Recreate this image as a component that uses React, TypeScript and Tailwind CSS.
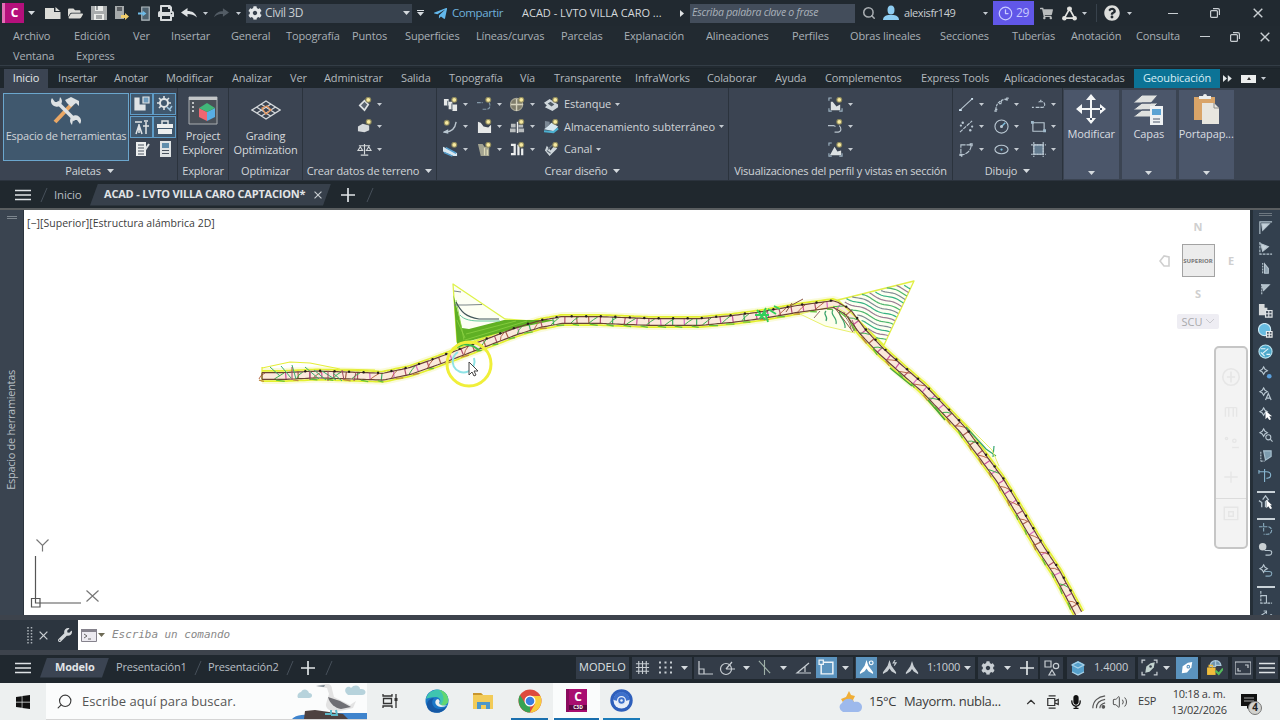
import type { ReactNode } from "react";
import {
  FaCog,
  FaFolderOpen,
  FaMicrophone,
  FaPrint,
  FaQuestionCircle,
  FaSave,
  FaShoppingCart,
  FaTelegramPlane,
  FaUser,
  FaWindows,
  FaWrench,
} from "react-icons/fa";
import { ChevronUp, Clock3, Search, Volume2 } from "lucide-react";

type Pt = [number, number];

function Slot({ w, children }: { w: string; children?: ReactNode }) {
  return <div className={`flex h-full shrink-0 items-center whitespace-nowrap ${w}`}>{children}</div>;
}

function Caret({ className = "text-[#d5dade]" }: { className?: string }) {
  return (
    <svg width="7" height="4" viewBox="0 0 7 4" className={`shrink-0 ${className}`}>
      <path d="M0 0h7L3.5 4z" fill="currentColor" />
    </svg>
  );
}

function SmallCaret() {
  return (
    <svg width="5" height="3" viewBox="0 0 5 3" className="shrink-0 text-[#c5cbd1]">
      <path d="M0 0h5L2.5 3z" fill="currentColor" />
    </svg>
  );
}

function Ico({ s = 16, children, className = "" }: { s?: number; children: ReactNode; className?: string }) {
  return (
    <svg
      width={s}
      height={s}
      viewBox="0 0 16 16"
      fill="none"
      stroke="currentColor"
      strokeWidth="1.2"
      className={`shrink-0 ${className}`}
    >
      {children}
    </svg>
  );
}

function Spark({ x = 12, y = 3 }: { x?: number; y?: number }) {
  return (
    <g stroke="none">
      <circle cx={x} cy={y} r="3.200" fill="#8f8a5d" />
      <circle cx={x} cy={y} r="2" fill="#f7e9a0" />
    </g>
  );
}

function Burger({ className = "text-[#dfe3e6]" }: { className?: string }) {
  return (
    <svg width="16" height="12" viewBox="0 0 16 12" className={className}>
      <path d="M0 1.5h16M0 6h16M0 10.5h16" stroke="currentColor" strokeWidth="1.7" />
    </svg>
  );
}

function Plus() {
  return (
    <svg width="14" height="14" viewBox="0 0 14 14" className="text-[#dfe3e6]">
      <path d="M7 0v14M0 7h14" stroke="currentColor" strokeWidth="1.7" />
    </svg>
  );
}

function Slash() {
  return (
    <svg width="8" height="14" viewBox="0 0 8 14" className="text-[#46505a]">
      <path d="M7 0L1 14" stroke="currentColor" />
    </svg>
  );
}

function Cross({ s = 10 }: { s?: number }) {
  return (
    <svg width={s} height={s} viewBox="0 0 10 10" className="text-[#c9ced2]">
      <path d="M.7.7l8.6 8.6M9.3.7L.7 9.3" stroke="currentColor" strokeWidth="1.4" />
    </svg>
  );
}

function Restore() {
  return (
    <svg width="10" height="10" viewBox="0 0 10 10" fill="none" className="text-[#c9ced2]">
      <rect x=".6" y="2.6" width="6.8" height="6.8" rx="1" stroke="currentColor" strokeWidth="1.2" />
      <path d="M3 .7h5a1.4 1.4 0 011.4 1.4V7" stroke="currentColor" strokeWidth="1.2" />
    </svg>
  );
}

function TitleBar() {
  return (
    <div className="flex h-[26px] items-center bg-[#212930] pl-[2px] text-[11px] text-[#c9ced2]">
      <Slot w="w-[26px]">
        <div className="flex h-5 w-[22px] items-center justify-center border-l-[3px] border-[#e26fb5] bg-[#b5107c] text-[12px] font-bold text-white">
          C
        </div>
      </Slot>
      <Slot w="w-[17px]"><Caret /></Slot>
      <Slot w="w-[23px]">
        <svg width="16" height="12" viewBox="0 0 16 12" fill="#dcdcd8"><path d="M0 1h9v4h6.500V12H0zM10.500 0l4.500 4h-4.500z" /></svg>
      </Slot>
      <Slot w="w-[23px]"><FaFolderOpen size={15} color="#dcdcd8" /></Slot>
      <Slot w="w-[23px]">
        <Ico>
          <path d="M0 1h16v14H0z" fill="#a9acad" stroke="none" />
          <path d="M4 1h8v5H4zM3 9h10v6H3z" fill="#ecedeb" stroke="none" />
          <path d="M5 11h6M5 13h6M6 1v4" stroke="#5c6266" />
        </Ico>
      </Slot>
      <Slot w="w-6">
        <Ico><path d="M1 1h9v13H1z" fill="#a6aaab" stroke="none" /><path d="M3 2h5v4H3z" fill="#5c6064" stroke="none" /><path d="M7 10h4V8l4 3.500-4 3.500v-2H7z" fill="#f1cd6a" stroke="none" /></Ico>
      </Slot>
      <Slot w="w-5">
        <Ico s={15}><path d="M4 1h8v14H4z" stroke="#b5bdc2" fill="#4f626f" /><path d="M0 7h5V5l4 3-4 3V9H0z" fill="#6fbbe8" stroke="none" /></Ico>
      </Slot>
      <Slot w="w-[23px]"><FaPrint size={16} color="#d9dcde" /></Slot>
      <Slot w="w-[22px]">
        <svg width="16" height="10" viewBox="0 0 16 10" fill="#dfe2e4"><path d="M0 4.500L6.500 0v3C11 3 14.500 5 16 9.500 13 6.500 10 6 6.500 6v3z" /></svg>
      </Slot>
      <Slot w="w-[11px]"><SmallCaret /></Slot>
      <Slot w="w-[22px]">
        <svg width="15" height="10" viewBox="0 0 16 10" fill="#535c65"><path d="M16 4.500L9.500 0v3C5 3 1.500 5 0 9.500 3 6.500 6 6 9.500 6v3z" /></svg>
      </Slot>
      <Slot w="w-[10px]"><SmallCaret /></Slot>
      <div className="flex h-[19px] w-[166px] items-center bg-[#38424e] pr-[2px] pl-[2px] text-[12px]">
        <FaCog size={14} color="#e3e6e8" />
        <span className="ml-[3px] flex-1 tracking-[-0.400px]">Civil 3D</span>
        <Caret />
      </div>
      <div className="ml-[5px] flex w-4 flex-col gap-[1px]">
        <div className="h-[1px] w-[7px] bg-[#d5dade]" />
        <Caret />
      </div>
      <Slot w="w-[19px]"><FaTelegramPlane size={15} color="#63b8ec" /></Slot>
      <Slot w="w-[70px]"><span className="text-[11.500px] tracking-[-0.400px] text-[#6fb1dd]">Compartir</span></Slot>
      <Slot w="w-[158px]"><span className="text-[11px] text-[#d5d9dc]">ACAD - LVTO VILLA CARO ...</span></Slot>
      <Slot w="w-[10px]">
        <svg width="4" height="7" viewBox="0 0 4 7" fill="#e0e3e5"><path d="M0 0l4 3.500L0 7z" /></svg>
      </Slot>
      <div className="flex h-[19px] w-[165px] items-center bg-[#434d5b] pl-[2px] text-[10.5px] tracking-[-0.25px] whitespace-nowrap text-[#a9b1ba] italic">
        Escriba palabra clave o frase
      </div>
      <div className="w-[7px]" />
      <Slot w="w-[21px]"><Search size={14} strokeWidth={2.600} color="#a9aeb2" /></Slot>
      <Slot w="w-[21px]">
        <Ico className="text-[#8ecdf2]">
          <g fill="currentColor" stroke="none"><ellipse cx="8" cy="5" rx="3.500" ry="4.500" /><path d="M0 15c0-4 4-5 6-5h4c2 0 6 1 6 5z" /></g>
        </Ico>
      </Slot>
      <Slot w="w-[79px]"><span className="tracking-[-0.400px]">alexisfr149</span></Slot>
      <Slot w="w-[10px]"><SmallCaret /></Slot>
      <div className="flex h-6 w-[41px] items-center justify-center gap-[3px] bg-[#6157e8] text-[12px] tracking-[-0.300px] text-[#c9cbff]">
        <Clock3 size={15} />
        29
      </div>
      <div className="w-[6px]" />
      <Slot w="w-[22px]"><FaShoppingCart size={13} color="#b9bcbd" /></Slot>
      <Slot w="w-5">
        <Ico s={15} className="text-[#e3e3e0]"><path d="M8 3L2.500 13h11z" strokeWidth="1.8" /><g fill="currentColor"><circle cx="8" cy="3" r="2" /><circle cx="2.500" cy="13" r="1.800" /><circle cx="13.500" cy="13" r="1.800" /></g></Ico>
      </Slot>
      <Slot w="w-[14px]"><SmallCaret /></Slot>
      <div className="h-[18px] w-[8px] border-l border-[#38424c]" />
      <Slot w="w-[23px]"><FaQuestionCircle size={16} color="#dcdddb" /></Slot>
      <Slot w="w-[41px]"><SmallCaret /></Slot>
      <Slot w="w-[42px]"><div className="h-[1px] w-[10px] bg-[#c9ced2]" /></Slot>
      <Slot w="w-[43px]"><Restore /></Slot>
      <Cross />
    </div>
  );
}

const menus = [
  ["Archivo", "w-[61px]"],
  ["Edición", "w-[59px]"],
  ["Ver", "w-[38px]"],
  ["Insertar", "w-[60px]"],
  ["General", "w-[55px]"],
  ["Topografía", "w-[66px]"],
  ["Puntos", "w-[53px]"],
  ["Superficies", "w-[71px]"],
  ["Líneas/curvas", "w-[85px]"],
  ["Parcelas", "w-[63px]"],
  ["Explanación", "w-[82px]"],
  ["Alineaciones", "w-[86px]"],
  ["Perfiles", "w-[58px]"],
  ["Obras lineales", "w-[90px]"],
  ["Secciones", "w-[72px]"],
  ["Tuberías", "w-[59px]"],
  ["Anotación", "w-[65px]"],
  ["Consulta", "w-[64px]"],
];

function MenuBar() {
  return (
    <div className="h-[43px] border-b border-[#1c242a] bg-[#222a31] pl-[13px] text-[11px] tracking-[-0.150px] text-[#a9b0b6]">
      <div className="flex h-[21px] items-center">
        {menus.map(([label, w]) => (
          <Slot key={label} w={w}>{label}</Slot>
        ))}
        <Slot w="w-[30px]"><div className="h-[1px] w-[10px] bg-[#c9ced2]" /></Slot>
        <Slot w="w-[30px]"><Restore /></Slot>
        <Cross />
      </div>
      <div className="flex h-[18px] items-center">
        <Slot w="w-[63px]">Ventana</Slot>
        <Slot w="w-[63px]">Express</Slot>
      </div>
      <div className="-ml-[13px] h-[1px] bg-[#333d46]" />
    </div>
  );
}

const ribbonTabs = [
  ["Insertar", "w-[56px]"],
  ["Anotar", "w-[52px]"],
  ["Modificar", "w-[66px]"],
  ["Analizar", "w-[58px]"],
  ["Ver", "w-[34px]"],
  ["Administrar", "w-[77px]"],
  ["Salida", "w-[48px]"],
  ["Topografía", "w-[71px]"],
  ["Vía", "w-[34px]"],
  ["Transparente", "w-[81px]"],
  ["InfraWorks", "w-[72px]"],
  ["Colaborar", "w-[68px]"],
  ["Ayuda", "w-[50px]"],
  ["Complementos", "w-[96px]"],
  ["Express Tools", "w-[83px]"],
  ["Aplicaciones destacadas", "w-[130px]"],
];

function RibbonTabs() {
  return (
    <div className="flex h-[19px] items-center bg-[#1f272d] pl-1 text-[11px] tracking-[-0.150px] text-[#b3b9be]">
      <div className="mr-[10px] flex h-full w-11 items-center justify-center bg-[#3b4452] text-[#e4e7e9]">Inicio</div>
      {ribbonTabs.map(([label, w]) => (
        <Slot key={label} w={w}>{label}</Slot>
      ))}
      <div className="mr-[3px] flex h-full w-[86px] items-center justify-center bg-[#0c7396] text-[#d9eef5]">Geoubicación</div>
      <Slot w="w-[18px]">
        <svg width="9" height="7" viewBox="0 0 9 7" fill="#e3e6e8"><path d="M0 0l4 3.500L0 7zM4.800 0l4 3.500-4 3.500z" /></svg>
      </Slot>
      <div className="mr-[5px] flex h-2 w-[15px] items-center justify-center bg-[#eceeee] text-[#333]">
        <svg width="4" height="3" viewBox="0 0 4 3"><path d="M0 3h4L2 0z" fill="currentColor" /></svg>
      </div>
      <SmallCaret />
    </div>
  );
}

function Panel({ w, title, caret, children }: { w: string; title: string; caret?: boolean; children: ReactNode }) {
  return (
    <div className={`flex shrink-0 flex-col border-r border-[#2b333d] bg-[#3b4452] ${w}`}>
      <div className="flex h-[74px] pt-[5px]">{children}</div>
      <div className="flex h-[18px] items-center justify-center gap-[6px] whitespace-nowrap text-[#d0d4d8]">
        {title}
        {caret && <Caret />}
      </div>
    </div>
  );
}

function MiniButton({ on, children }: { on?: boolean; children: ReactNode }) {
  return (
    <div className={`flex h-[22px] w-[23px] items-center justify-center border text-[#dfe3e5] ${on ? "border-[#5f9dc8] bg-[#40586e]" : "border-transparent"}`}>
      {children}
    </div>
  );
}

function BigButton({ w, lines, children }: { w: string; lines: string[]; children: ReactNode }) {
  return (
    <div className={`flex flex-col items-center pt-[2px] text-center leading-[14px] whitespace-nowrap text-[#d5d9dc] ${w}`}>
      <div className="mb-[4px] flex h-[30px] items-center">{children}</div>
      {lines.map((l) => (
        <span key={l}>{l}</span>
      ))}
    </div>
  );
}

const terrainIcons = [
  <><path d="M3 9l5-5 4 4-4 6z" fill="#59636f" stroke="#dde1e3" strokeWidth="1.800" /><Spark /></>,
  <><path d="M1 8l5-3 7 2v5l-5 2-7-1z" fill="#d5d9db" stroke="none" /><Spark x={12.500} /></>,
  <path d="M8 2v11M4 14h8M2 4h12M1 9l2.500-4L6 9zM10 9l2.500-4L15 9z" stroke="#d5d9db" />,
];

const designIcons = [
  <><path d="M1 2h5v3h4v3h5v7h-5v-2H6V9H1z" fill="#e6e8e8" stroke="none" /><path d="M5 4v6M9.500 7v7" stroke="#65717c" /><Spark /></>,
  <><path d="M0 6h6M6 13h4c5 0 4-5 3-7" stroke="#8499a9" strokeDasharray="4 1" /><Spark /></>,
  <><circle cx="7" cy="8" r="6.500" fill="#7e7c6b" stroke="#a7a695" /><path d="M7 2v13M1 8h13" stroke="#d5d2bd" strokeWidth="1.500" /><Spark /></>,
  <><path d="M2 14c7 0 11-4 12-11" strokeWidth="1.500" stroke="#b9c4cd" /><path d="M1 14l4-2v3z" fill="#b9c4cd" /><Spark x={4} y={4} /></>,
  <><path d="M1 3v12h14V6l-3 3-5-1-3-4z" fill="#e6e8e8" stroke="none" /><Spark /></>,
  <><path d="M1 5h5v4H1zM0 10h6v4H0zM9 10h6v4H9zM9 6h5v3H9z" fill="#b7bbbd" stroke="none" /><path d="M8 3v12" stroke="#efefef" strokeWidth="1.500" /><Spark /></>,
  <><path d="M0 5l15 7v3h-4L0 10z" fill="#d8e7f0" stroke="none" /><path d="M1 11l9 4M3 6l11 6" stroke="#55a0cf" strokeWidth="1.600" /><Spark /></>,
  <><path d="M1 2h5l2 3h5v10H4z" fill="#a3a491" stroke="none" /><path d="M8 6v8M11 8v6" stroke="#dedbb8" strokeWidth="1.300" /><Spark /></>,
  <><path d="M1 3h4v10H1M9 3v11M13 7v7" stroke="#eceeee" strokeWidth="2.400" /><Spark /></>,
];

const wideIcons = [
  { label: "Estanque", icon: <><path d="M0 6l6-4 9 6v3l-6 4-8-4 2-2z" fill="#cfd7dc" stroke="none" /><path d="M4 7l3-2 4 3-3 2z" fill="#4e5a66" stroke="none" /><Spark /></> },
  { label: "Almacenamiento subterráneo", icon: <><path d="M0 11l8-7 7 4-4 5z" fill="#d8e7f0" stroke="none" /><path d="M0 13l10 1 5-4" stroke="#4cb0d0" strokeWidth="2.200" /><path d="M1 2v8l5-4V3z" fill="#7b8895" stroke="none" /><Spark /></> },
  { label: "Canal", icon: <><path d="M3 4l-2 5 5 6 8-8-3-3-4 5z" fill="#cfd7dc" stroke="none" /><path d="M3 9l4 3M9 3l-5 5" stroke="#65717c" /><Spark /></> },
];

const profileIcons = [
  <><path d="M3 5v9h10V8l-4 2-4-5z" fill="#dde1e3" stroke="none" /><path d="M1 4V1h3M15 12v3h-3M1 12v3h3" stroke="#9fb4c3" /><Spark /></>,
  <><path d="M0 7h6l2 1M7 14h4c4-1 3-5 1-7" stroke="#b9c4cd" /><Spark /></>,
  <><path d="M2 14l5-9 3 5 4-1v5z" fill="#dde1e3" stroke="none" /><path d="M1 4V1h3M15 12v3h-3M1 12v3h3" stroke="#9fb4c3" /><Spark /></>,
];

const drawIcons = [
  <><path d="M1 14L14 2" /><path d="M0 13h3v2H0zM13 1h2v2h-2z" fill="#cfe3f1" stroke="none" /></>,
  <path d="M2 14C2 7 6 3 14 2M1 13h2v2H1zM6 5h2v2H6zM13 1h2v2h-2z" strokeDasharray="3 1" />,
  <path d="M1 11h2M5 11h7c4 0 3-6 0-6H9l2-2" strokeDasharray="4 1" />,
  <><path d="M1 14L14 2" strokeDasharray="4 1" /><g fill="currentColor" stroke="none"><circle cx="4" cy="4" r="1.300" /><circle cx="12" cy="12" r="1.300" /><circle cx="14" cy="8" r="1.200" /><circle cx="2" cy="7" r="1.200" /></g></>,
  <><circle cx="8" cy="8" r="7" /><path d="M8 8l4-4" stroke="#7fc0e0" strokeWidth="1.600" /><circle cx="8" cy="8" r="1" fill="currentColor" /></>,
  <><path d="M2 4h12v9H2z" /><path d="M0 2h3v3H0zM13 11h3v3h-3z" fill="#9fb9cb" stroke="none" /></>,
  <path d="M2 3h11C13 9 9 13 2 14zM1 13h2v2H1zM12 2h2v2h-2z" strokeDasharray="5 1" />,
  <><ellipse cx="8" cy="8" rx="7" ry="4.500" /><circle cx="8" cy="8" r="1.200" fill="#7fc0e0" stroke="none" /></>,
  <><path d="M3 3h10v10H3z" fill="#627a8e" /><path d="M3 0v16M13 0v16M0 3h16M0 13h16" strokeDasharray="2 1" /></>,
];

function IconGrid({ icons, className }: { icons: ReactNode[]; className: string }) {
  return (
    <div className={`grid auto-rows-[22.5px] ${className}`}>
      {icons.map((icon, i) => (
        <div key={i} className="flex items-center gap-[5px] text-[#b9c7d2]">
          <Ico s={15}>{icon}</Ico>
          <SmallCaret />
        </div>
      ))}
    </div>
  );
}

function CollapsedPanel({ label, children }: { label: string; children: ReactNode }) {
  return (
    <div className="mt-[2px] mr-[3px] flex h-[89px] w-[54.500px] flex-col items-center overflow-hidden bg-[#4b566a] text-[#d9dde1]">
      <div className="flex h-[36px] items-center pt-[2px]">{children}</div>
      <div className="h-[18px] leading-[16px] tracking-[-0.100px] whitespace-nowrap">{label}</div>
      <div className="mt-[27px]"><Caret /></div>
    </div>
  );
}

function Ribbon() {
  return (
    <div className="flex h-[93px] border-b border-[#2b333d] bg-[#3b4452] pl-[2px] text-[11px] tracking-[-0.200px] text-[#d0d4d8]">
      <Panel w="w-[176px]" title="Paletas" caret>
        <div className="ml-[1px] flex h-[68px] w-[126px] shrink-0 flex-col items-center border border-[#6ba6cd] bg-[#40586e]">
          <svg width="32" height="32" viewBox="0 0 32 32" className="mt-[1px]">
            <path d="M5 27L22 9" stroke="#e9a765" strokeWidth="4" />
            <path d="M15 5l6-3 8 4v5l-3-3-5 4-4-4z" fill="#dde1e3" />
            <path d="M7 7l18 18" stroke="#dde1e3" strokeWidth="3.500" />
            <path d="M2 3a5.500 5.500 0 108-1l-1 5-4 0zM30 29a5.500 5.500 0 10-8 1l1-5 4 0z" fill="#dde1e3" />
          </svg>
          <span className="mt-[1px] tracking-[-0.270px] whitespace-nowrap">Espacio de herramientas</span>
        </div>
        <div className="ml-[1px] grid auto-rows-[22.500px] grid-cols-[23px_23px]">
          <MiniButton on><Ico><path d="M1 2h4v7h6v5H1z" fill="#dfe3e5" /><path d="M9 1h6v6H9z" fill="#6f9cbd" /></Ico></MiniButton>
          <MiniButton on><Ico><circle cx="7" cy="7" r="4" strokeWidth="2" /><path d="M7 0v3M7 11v3M0 7h3M11 7h3M2 2l2 2M10 4l2-2M2 12l2-2" strokeWidth="1.600" /><path d="M10 11l4 4M15 10l-3 4" stroke="#9cc3dd" strokeWidth="1.500" /></Ico></MiniButton>
          <MiniButton on><Ico><path d="M5 6L2 15M5 6l3 9M5 5v9M1 3h7M12 3v12M9 7h6M10 2h4" strokeWidth="1.500" /></Ico></MiniButton>
          <MiniButton on><Ico><path d="M0 5h16v4H0zM1 10h14v5H1z" fill="#eceeee" stroke="none" /><path d="M5 5V2h6v3" strokeWidth="1.500" /></Ico></MiniButton>
          <MiniButton><Ico><path d="M2 1h10v14H2z" fill="#eceeee" stroke="none" /><path d="M4 4h6M4 7h6M4 10h6M4 13h6" stroke="#4a5460" strokeWidth="1.200" /><path d="M11 9l4-6" strokeWidth="2" /></Ico></MiniButton>
          <MiniButton><Ico><path d="M3 0h11v16H3z" fill="#dfe3e5" stroke="none" /><path d="M5 2h7v5H5z" fill="#5f8dac" stroke="none" /><path d="M5 9.500h7M5 12.500h7" stroke="#4a5460" /></Ico></MiniButton>
        </div>
      </Panel>

      <Panel w="w-[51px]" title="Explorar">
        <BigButton w="w-full" lines={["Project", "Explorer"]}>
          <svg width="30" height="29" viewBox="0 0 30 29">
            <path d="M1 1h28v27H1z" fill="#4a5058" stroke="#a9adb0" />
            <path d="M1 1h28v3H1z" fill="#c3c6c8" />
            <path d="M4 7h2M4 11h2M4 15h2" stroke="#e5e5e5" strokeWidth="1.500" />
            <path d="M11 12l8 4v9l-8-4z" fill="#ef6671" />
            <path d="M27 12l-8 4v9l8-4z" fill="#58aee5" />
            <path d="M19 7l8 5-8 4-8-4z" fill="#41b779" />
          </svg>
        </BigButton>
      </Panel>

      <Panel w="w-[74px]" title="Optimizar">
        <BigButton w="w-full" lines={["Grading", "Optimization"]}>
          <svg width="30" height="20" viewBox="0 0 30 20" fill="none" stroke="#d5d9dc" strokeWidth="1.300">
            <path d="M15 1l14 9-14 9L1 10zM10 4l14 9M5.500 7l14 9M20 4L6 13M24.500 7l-14 9" />
            <path d="M11 8l5-2 4 4-5 4z" stroke="#e49258" />
          </svg>
        </BigButton>
      </Panel>

      <Panel w="w-[134px]" title="Crear datos de terreno" caret>
        <IconGrid icons={terrainIcons} className="ml-[54px]" />
      </Panel>

      <Panel w="w-[292px]" title="Crear diseño" caret>
        <IconGrid icons={designIcons} className="ml-[6px] grid-cols-[33.500px_33.500px_34px]" />
        <div className="grid auto-rows-[22.500px]">
          {wideIcons.map(({ label, icon }) => (
            <div key={label} className="flex items-center gap-[5px] tracking-[-0.080px] whitespace-nowrap">
              <Ico s={15}>{icon}</Ico>
              {label}
              <span className="-ml-[1px]"><SmallCaret /></span>
            </div>
          ))}
        </div>
      </Panel>

      <Panel w="w-[224px]" title="Visualizaciones del perfil y vistas en sección">
        <IconGrid icons={profileIcons} className="ml-[99px]" />
      </Panel>

      <Panel w="w-[110px]" title="Dibujo" caret>
        <IconGrid icons={drawIcons} className="ml-[6px] grid-cols-[34.500px_37px_37px]" />
      </Panel>

      <div className="ml-[1px] flex">
        <CollapsedPanel label="Modificar">
          <svg width="30" height="30" viewBox="0 0 30 30" fill="#f4f6f7">
            <path d="M14 4h2v22h-2zM4 14h22v2H4zM15 0l5 6H10zM15 30l5-6H10zM0 15l6-5v10zM30 15l-6-5v10z" />
          </svg>
        </CollapsedPanel>
        <CollapsedPanel label="Capas">
          <svg width="31" height="31" viewBox="0 0 31 31">
            <path d="M0 23l9-7h16l-7 7zM0 16l9-7h16l-7 7zM0 9l9-8h16l-7 8z" fill="#dfe1df" stroke="#4b566a" />
            <path d="M17 12h13v19H17z" fill="#eef1f3" />
            <path d="M19 15h9v6h-9z" fill="#5ba3d4" />
            <path d="M20 25h7M20 28h7" stroke="#4b566a" />
          </svg>
        </CollapsedPanel>
        <CollapsedPanel label="Portapap...">
          <svg width="27" height="31" viewBox="0 0 27 31">
            <path d="M1 3h21v23H1z" fill="#d9a468" />
            <path d="M6 5V2h4a2 2 0 014 0h4v3z" fill="#eceeee" />
            <path d="M9 9h12l5 5v16H9z" fill="#e8e6df" />
            <path d="M21 9v5h5" fill="none" stroke="#8d8c88" />
          </svg>
        </CollapsedPanel>
      </div>
    </div>
  );
}

function FileTabs() {
  return (
    <div className="flex h-[29px] items-center border-b-2 border-[#5a5e60] bg-[#20282e] pl-[15px] text-[11.5px] tracking-[-0.150px] text-[#b5bbc0]">
      <Slot w="w-[25px]"><Burger /></Slot>
      <Slot w="w-[14px]"><Slash /></Slot>
      <Slot w="w-9">Inicio</Slot>
      <div className="flex h-[22px] w-[241px] items-center bg-[#37404b] pl-[14px] text-[11px] font-bold tracking-[-0.200px] whitespace-nowrap text-[#e1e4e7] [clip-path:polygon(8px_0,100%_0,233px_100%,0_100%)]">
        <span className="w-[210px]">ACAD - LVTO VILLA CARO CAPTACION*</span>
        <Cross s={8} />
      </div>
      <div className="ml-[10px] flex w-[25px]"><Plus /></div>
      <Slash />
    </div>
  );
}

const centerline: Pt[] = [
  [262, 376], [283, 376], [317, 374.5], [350, 375.5], [383, 376.7], [410, 371], [433, 363], [457, 354], [483, 344],
  [517, 331], [540, 324], [562, 320], [600, 320], [650, 322], [700, 322], [732, 319], [763, 315], [797, 309], [834, 304],
  [848, 312], [863, 332], [880, 350], [900, 368], [923, 388], [947, 413], [963, 430], [983, 457], [1000, 480],
  [1020, 513], [1040, 547], [1057, 573], [1080, 616],
];

type Station = { p: Pt; n: Pt };

// Walks the polyline and returns evenly spaced stations with their unit normal
function stations(step: number) {
  const out: Station[] = [];
  let carry = 0;
  for (let i = 1; i < centerline.length; i++) {
    const [x0, y0] = centerline[i - 1];
    const [x1, y1] = centerline[i];
    const len = Math.hypot(x1 - x0, y1 - y0);
    const n: Pt = [(y1 - y0) / len, -(x1 - x0) / len];
    for (; carry < len; carry += step) {
      const t = carry / len;
      out.push({ p: [x0 + (x1 - x0) * t, y0 + (y1 - y0) * t], n });
    }
    carry -= len;
  }
  return out;
}

const noise = (i: number) => Math.abs(Math.sin(i * 12.9898) * 43758.5453) % 1;
const toPath = (pts: Pt[]) => "M" + pts.map((p) => p.map((v) => v.toFixed(1)).join(" ")).join("L");
const at = (s: Station, d: number, slide = 0): Pt => [
  s.p[0] + s.n[0] * d - s.n[1] * slide,
  s.p[1] + s.n[1] * d + s.n[0] * slide,
];

// Contour ending on the right side of the fan, traced back to its top or lower-left border
function fanContour(t: number) {
  const ex = 911 - 26 * t;
  const ey = 286 + 57 * t;
  const pts: Pt[] = [];
  for (let x = ex; x > 842; x -= 2) {
    const y = ey - 0.4 * (ex - x) + Math.sin((x + t * 9) / 4.5) * 1.2;
    if (y < 300 - 0.25 * (x - 838) || y > 303 + 1.13 * (x - 845)) break;
    pts.push([x, y]);
  }
  return pts.length > 1 ? toPath(pts) : "";
}

function Corridor() {
  const path = stations(3);
  const edge = (d: number) => toPath(path.map((s) => at(s, d)));
  const tickColors = ["#c9519b", "#3fb066", "#b0506a", "#d76cc0", "#a7604c"];

  return (
    <g fill="none" strokeLinejoin="round">
      <path d={edge(0)} stroke="#f6f7b4" strokeWidth="16" opacity=".5" />
      <path d={edge(5.200)} stroke="#e4f02f" strokeWidth="1.700" />
      <path d={edge(-5.200)} stroke="#e4f02f" strokeWidth="1.700" />
      <path d={edge(0)} stroke="#fbe9dc" strokeWidth="7" />
      <path d="M262 367v15M262 368l28-6 20 1 30 6 35 1" stroke="#e5ee3a" strokeWidth="1.200" />

      {/* slope fan at the first bend */}
      <path d="M453 284L457 342L462 345L530 321L505 319Z" fill="#fdfff4" stroke="#def24a" strokeWidth="1.300" />
      <path d="M453.500 295L457 344L466 342L495 334L522 327L556 320L504 320L469 329L462 328Z" fill="#5fb024" />
      <path d="M456 300l8 40M457 320l8 18M466 334l50-13M465 340l62-19" stroke="#8ad043" strokeWidth=".8" />
      <path d="M454 305h12l16-.500M454 291l7 1" stroke="#7b8588" />
      <path d="M456 302c5 10 10 15 23 17h20" stroke="#42575a" strokeWidth="1.200" />
      <path d="M460 315c4 5 12 6 20 6h20" stroke="#66c9a0" />

      {/* slope fan past the second bend */}
      <path d="M838 300L914 281L884 345Z" fill="#fdfff2" stroke="#e2ef44" strokeWidth="1.300" />
      {Array.from({ length: 15 }, (_, i) => (
        <path
          key={i}
          d={fanContour(0.03 + i * 0.066)}
          stroke={["#35b183", "#9a7d94", "#4db56b", "#7f8b93"][i % 4]}
          strokeWidth="1.200"
        />
      ))}

      {/* lower fan before the second bend */}
      <path d="M800 314l25 12 30 7-9-20-12-7z" fill="#fdffec" stroke="#e8f06c" />
      <path
        d="M826 311c-4 4 3 5 0 10M833 310c-4 5 5 7 3 14M840 311c-3 5 6 8 5 17"
        stroke="#3da56c"
        strokeWidth="1.200"
      />
      <path d="M820 311l-6 7M844 312c0 6 6 8 7 17M848 316l6 15M852 320l5 11" stroke="#966b6a" />
      <path d="M966 427l20 22 10 7M994 446l-1 11" stroke="#35a56f" strokeWidth="1.200" />
      <path d="M960 418l32 32 7 16" stroke="#eaf16a" />

      {stations(12).slice(2).map((s, i) => (
        <path
          key={i}
          d={toPath([at(s, 3.500, noise(i + 7) - 0.5), at(s, -3.500, noise(i + 5) - 0.5)])}
          stroke={tickColors[Math.floor(noise(i + 11) * 5)]}
          strokeWidth="1.200"
        />
      ))}
      {stations(19).map((s, i) => (
        <path
          key={i}
          d={toPath([at(s, 3, 3), at(s, 0.500, -1), at(s, -3, -3 - noise(i) * 4)])}
          stroke={noise(i + 4) > 0.45 ? "#3cb24e" : "#b9694a"}
        />
      ))}

      <path d={edge(3.400)} stroke="#6b4334" strokeWidth="1.200" />
      <path d={edge(-3.400)} stroke="#6b4334" strokeWidth="1.200" />
      <path d="M262 372.500v7" stroke="#6b4334" strokeWidth="1.200" />

      {stations(14.500).slice(3).map((s, i) => {
        const [x, y] = at(s, 3.800);
        return <circle key={i} cx={x} cy={y} r="1.200" fill="#241f1c" />;
      })}
      {stations(17).map((s, i) => (
        <path
          key={i}
          d={toPath([at(s, -4.200, -3), at(s, -5.400, 2 + noise(i) * 4)])}
          stroke={noise(i + 2) > 0.4 ? "#62bf3c" : "#c08a3c"}
          strokeWidth="1.300"
        />
      ))}

      {/* contour bundles */}
      <path d="M270 367l10 9M281 366l10 12M292 365l4 14M305 367l14 12M314 370l12 10M322 371l14 9M333 373l9 8" stroke="#38ae72" />
      <path d="M292 367v13M310 371v9M328 371v10M342 370l2 10M356 372l-2 9" stroke="#9c4a60" />
      <path d="M757 310l8 10M760 319l6-11M764 310l4 12M755 315h14M768 309l8 5M774 306l6 3" stroke="#31cf58" strokeWidth="1.800" />
      <path d="M790 306l13-7M786 312l6-9M835 308l18 24" stroke="#8a5540" />
      <path d="M928 400l17 20M890 368l22 18" stroke="#49a838" strokeWidth="1.500" />
      <path d="M457 347l7-3 9 2 6 4" stroke="#39b84b" strokeWidth="2" />
    </g>
  );
}

function Drawing() {
  return (
    <svg width="1226" height="405" viewBox="24 210 1226 405" className="block">
      <Corridor />
      <circle cx="469" cy="364" r="22" fill="none" stroke="#f0ef3a" strokeWidth="3" />
      <path d="M458 352a11 11 0 1016 6" fill="none" stroke="#8fe3e6" strokeWidth="2" />
      <path d="M469 362v13l3-3 2 4 2-1-2-4h4z" fill="#fff" stroke="#444" />
      {/* UCS axes */}
      <g fill="none" stroke="#555" strokeWidth="1.200">
        <path d="M35.500 556v47H81M31.500 598.500h8.500v8.500h-8.500z" />
        <path d="M36.500 539.500l6 6 6-6M42.500 545.500v6M86.500 590.500l12 11M98.500 590.500l-12 11" stroke="#777" />
      </g>
    </svg>
  );
}

function ViewCube() {
  return (
    <div className="absolute top-[10px] right-[13px] flex w-[78px] flex-col items-center text-[11px] leading-[14px] font-bold text-[#cfcfcf]">
      <span>N</span>
      <div className="mt-[10px] flex w-full items-center justify-between">
        <svg width="12" height="12" viewBox="0 0 12 12" fill="none" stroke="#cfcfcf" strokeWidth="1.600"><path d="M5 1L1 6l4 5h5V2z" /></svg>
        <div className="flex h-[33px] w-[33px] items-center justify-center border-[1.500px] border-[#a3a3a3] bg-[#ececec] text-[6px] text-[#777]">SUPERIOR</div>
        <span className="w-[12px] text-center">E</span>
      </div>
      <span className="mt-[10px]">S</span>
      <div className="mt-[13px] flex h-[15px] w-[42px] items-center justify-center gap-[4px] rounded-[2px] bg-[#eeedf3] font-normal text-[#a9a9ac]">
        SCU
        <svg width="8" height="5" viewBox="0 0 8 5" fill="none" stroke="#c9c9ce"><path d="M0 0l4 4 4-4" /></svg>
      </div>
    </div>
  );
}

function NavBar() {
  return (
    <div className="absolute top-[136px] right-[2px] flex h-[203px] w-[34px] flex-col items-center rounded-[5px] border-2 border-[#c6c6c6] bg-[#f3f3f3] pt-[18px] text-[#e6e6e6]">
      <Ico s={22}><circle cx="8" cy="8" r="6" /><path d="M8 4v8M5 8h6" /></Ico>
      <Ico s={18} className="mt-[14px]"><path d="M3 13V5M6 13V5M10 13V5M13 13V5M3 5h10" /></Ico>
      <Ico s={18} className="mt-[14px]"><circle cx="4" cy="4" r="1" /><circle cx="11" cy="6" r="1.500" /><path d="M9 12h6" /></Ico>
      <Ico s={18} className="mt-[16px]"><path d="M2 8h12M8 3v10" /></Ico>
      <div className="mt-[12px] w-full border-t border-[#dcdcdc]" />
      <Ico s={18} className="mt-[6px]"><path d="M2 2h12v11H2zM6 6h4v4H6z" /></Ico>
    </div>
  );
}

const diamond = "M6 2l1.500 2.500L10 6 7.500 7.500 6 10 4.500 7.500 2 6l2.500-1.500z";
const sideIcons: ReactNode[] = [
  <><path d="M2 15V2h13" /><path d="M4 4h8l-7 7z" fill="#c6d2da" /></>,
  <><path d="M2 1v13h13" strokeDasharray="3 1" /><path d="M3 3l8 3-6 5z" fill="#c6d2da" /></>,
  <><path d="M5 2v12" strokeDasharray="2 1" /><path d="M7 3l4 5v5H7z" fill="#90a3b1" /></>,
  <><path d="M4 2v12" strokeDasharray="2 1" /><path d="M4 3h8L6 9z" fill="#b3c0c9" /></>,
  <><path d="M1 1h6v4h3v8H1z" fill="#d7dadb" stroke="none" /><path d="M8 8h7v7H8zM11.500 8v7M8 11.500h7" stroke="#dfe3e5" fill="#4a5561" /></>,
  <><circle cx="7" cy="7" r="6.500" fill="#68bce0" stroke="#cce9f5" /><path d="M9 9h6v6H9zM12 9v6M9 12h6" stroke="#eceeee" fill="#4a5561" /></>,
  <><circle cx="8" cy="8" r="7" fill="#4fa9cb" stroke="#b9e2ef" /><path d="M3 5h5M5 10l6-5M9 11h4M3 9l4 4" stroke="#e5f5fa" /></>,
  <><path d={diamond} /><circle cx="12" cy="12" r="2.500" fill="#5a9fdc" stroke="none" /></>,
  <><path d={diamond} /><path d="M8 15l3-7 3 7M9 13h4" strokeWidth="1.300" /></>,
  <><path d={diamond} /><path d="M8 5v9l2-2 2 3 2-1-2-3h3z" fill="#fff" stroke="none" /></>,
  <><path d={diamond} /><circle cx="11" cy="11" r="2.700" /><path d="M13 13l2.500 2.500" /></>,
  <><path d="M3 4v10M3 14h4" strokeDasharray="2 1" /><path d="M6 3h8v6l-6 4z" fill="#7d9caf" stroke="#a8c1cf" /></>,
  <path d="M7 1v14M1 4h8c6 0 6 7 0 7M1 2v4" stroke="#86b3cd" />,
  "bar",
  <><path d="M1 6l3 2v5M5 5l3-4 3 4-3 2v6" strokeWidth="1.400" /><path d="M9 5v9l2-2 2 3 2-1-2-3h2z" fill="#fff" stroke="none" /></>,
  "bar",
  <path d="M6 1v10M1 5h9c6 0 6 8 0 8H6" stroke="#86a8bc" strokeDasharray="4 1" />,
  <><circle cx="5" cy="5" r="4" fill="#c9d0d4" stroke="none" /><path d="M7 9h5c4 0 3 5 0 5H8" /></>,
  <><path d={diamond} /><path d="M7 9h5c4 0 3 5 0 5H8" stroke="#86a8bc" /></>,
  "bar",
  <><path d="M3 1v13h12" strokeDasharray="3 1" /><path d="M3 6h6v8" /></>,
  <path d="M3 6l6-4M6 1h3v3M13 5h2" />,
];

function Workspace() {
  return (
    <div className="flex h-[405px]">
      <div className="flex w-6 flex-col items-center justify-between border-r border-[#2b343d] bg-[#3a4450] pt-[6px] pb-[125px] text-[11px] tracking-[-0.300px] text-[#b8bfc5]">
        <div className="h-[3px] w-[10px] border-y border-[#7d868e]" />
        <span className="whitespace-nowrap [writing-mode:vertical-rl] rotate-180">Espacio de herramientas</span>
      </div>
      <div className="relative w-[1226px] bg-white">
        <Drawing />
        <span className="absolute top-[6px] left-[3px] text-[10.500px] tracking-[0.030px] whitespace-nowrap text-[#3c3c3c]">
          [−][Superior][Estructura alámbrica 2D]
        </span>
        <ViewCube />
        <NavBar />
      </div>
      <div className="flex w-[30px] flex-col items-center overflow-hidden border-l-[3px] border-[#252f38] bg-[#33404e] pt-[3px] pr-[2px] text-[#b7c5cf]">
        <div className="mb-[4px] h-[3px] w-[13px] shrink-0 border-y border-[#6d7780]" />
        {sideIcons.map((icon, i) =>
          icon === "bar" ? (
            <div key={i} className="my-[2px] h-[2px] w-[18px] shrink-0 bg-[#c9d2d8]" />
          ) : (
            <Ico key={i} s={15} className="mb-[5.700px]">{icon}</Ico>
          ),
        )}
      </div>
    </div>
  );
}

function CommandLine() {
  return (
    <div className="flex h-10 border-y-[5px] border-[#3d434c] bg-white">
      <div className="flex w-[78px] items-center bg-[#2c353f] pl-[27px]">
        <svg width="6" height="17" viewBox="0 0 6 17"><path d="M1 0v17M4.500 0v17" stroke="#aab1b7" strokeWidth="1.500" strokeDasharray="1.500 1.500" /></svg>
        <div className="ml-[6px]"><Cross s={9} /></div>
        <div className="ml-[10px]"><FaWrench size={14} color="#d3d7da" /></div>
      </div>
      <div className="flex items-center pl-[3px]">
        <svg width="16" height="13" viewBox="0 0 16 13">
          <path d="M.5.5h15v12H.5z" fill="#eceaf0" stroke="#85828c" />
          <path d="M0 0h16v3H0z" fill="#85828c" />
          <path d="M3 5l3 2-3 2M7 10h3" stroke="#666" fill="none" />
        </svg>
        <span className="mr-[7px] ml-[1px]"><Caret className="text-[#6d6a55]" /></span>
        <span className="font-['DejaVu_Sans_Mono',monospace] text-[11px] tracking-[-0.060px] text-[#898989] italic">Escriba un comando</span>
      </div>
    </div>
  );
}

function Group({ className, children }: { className: string; children: ReactNode }) {
  return <div className={`flex h-[22px] shrink-0 items-center bg-[#333c48] text-[#c8ced3] ${className}`}>{children}</div>;
}

const peak = "M8 0l2 6 5 7v2l-5-3-2-3-2 3-5 3v-2l5-7z";

function StatusBar() {
  return (
    <div className="flex h-7 items-center bg-[#20282f] pb-[3px] pl-[15px] text-[11px] tracking-[-0.200px] text-[#b9bfc4]">
      <Slot w="w-[25px]"><Burger /></Slot>
      <div className="flex h-5 w-[69px] items-center bg-[#3b4452] pl-[15px] font-bold text-[#e1e4e7] [clip-path:polygon(7px_0,100%_0,62px_100%,0_100%)]">
        Modelo
      </div>
      <div className="w-[7px]" />
      <Slot w="w-[78px]">Presentación1</Slot>
      <Slot w="w-[14px]"><Slash /></Slot>
      <Slot w="w-[78px]">Presentación2</Slot>
      <Slot w="w-[15px]"><Slash /></Slot>
      <Slot w="w-[24px]"><Plus /></Slot>
      <Slot w="w-[251px]"><Slash /></Slot>
      <Group className="mr-[3px] w-[53px] justify-center tracking-normal text-[#dfe2e5]">MODELO</Group>
      <Group className="mr-[2px] w-[60px] pl-[3px]">
        <Ico s={15}><path d="M4 1v14M8 1v14M12 1v14M1 4h14M1 8h14M1 12h14" /></Ico>
        <svg width="13" height="13" viewBox="0 0 13 13" className="mr-[9px] ml-[9px]">
          <path d="M0 1.500h13M0 6.500h13M0 11.500h13" stroke="#c8ced3" strokeWidth="2" strokeDasharray="2 3.500" />
        </svg>
        <Caret />
      </Group>
      <Group className="mr-[2px] w-[159px] pl-[3px]">
        <Ico s={16}><path d="M2 1v13h14M2 9h5v5" /></Ico>
        <Ico s={16} className="ml-[6px]"><circle cx="7" cy="9" r="5.500" /><path d="M7 9h9M7 9l6-7" /></Ico>
        <span className="ml-[8px]"><Caret /></span>
        <Ico s={15} className="ml-[7px]"><path d="M2 1l12 13M8 0v16" stroke="#9fb0a8" /></Ico>
        <span className="ml-[8px]"><Caret /></span>
        <Ico s={16} className="ml-[8px]"><path d="M14 3L2 13h14M10 6v6" /></Ico>
        <div className="ml-[5px] flex h-[21px] w-[21px] items-center justify-center bg-[#5b93be] text-[#eef4f8]">
          <Ico s={17}><path d="M5 3h9v11H3V5" strokeWidth="1.400" /><path d="M1 1h4v4H1z" /></Ico>
        </div>
        <span className="ml-[5px]"><Caret /></span>
      </Group>
      <Group className="mr-[3px] w-[120px] pl-[1px]">
        <div className="flex h-[21px] w-[21px] items-center justify-center bg-[#5b93be] text-white">
          <Ico s={15}><path d={peak} fill="currentColor" stroke="none" /><circle cx="13" cy="3" r="2" /></Ico>
        </div>
        <Ico s={15} className="ml-[5px]"><path d={peak} fill="currentColor" stroke="none" /><path d="M14 0l-2 3h3l-2 3" /></Ico>
        <Ico s={14} className="ml-[8px]"><path d={peak} fill="currentColor" stroke="none" /></Ico>
        <span className="ml-[8px] w-[37px]">1:1000</span>
        <Caret />
      </Group>
      <Group className="mr-[2px] w-[60px] pl-[3px]">
        <FaCog size={14} />
        <span className="mr-[9px] ml-[9px]"><Caret /></span>
        <Plus />
      </Group>
      <Group className="mr-[4px] w-[23px] justify-center">
        <Ico><path d="M1 1h6v6H1zM8 10l3 5H5z" /><circle cx="12" cy="6" r="2.700" /></Ico>
      </Group>
      <Group className="mr-[3px] w-[68px] pl-[3px] tracking-normal">
        <Ico><path d="M2 4l6-3 6 3v8l-6 3-6-3z" fill="#56a0cb" stroke="none" /><path d="M2 5l6 3 6-3-6-3zM2 12l6 3 6-3" stroke="#a9d2e8" /></Ico>
        <span className="ml-[8px]">1.4000</span>
      </Group>
      <Group className="mr-[3px] w-[60px] pl-[3px]">
        <Ico s={17}><path d="M1 4V1h3M12 1h3v3M15 12v3h-3M4 15H1v-3" /><path d="M4 13l1-6 4-3 4-1-1 5-4 4z" fill="#c3d3cf" stroke="none" /><circle cx="9" cy="7" r="1.200" stroke="none" fill="#333c48" /></Ico>
        <span className="mx-[5px]"><Caret /></span>
        <div className="ml-auto flex h-[22px] w-[22px] items-center justify-center bg-[#5b93be] text-white">
          <Ico s={14}><path d="M2 14l1-8 6-4 5-1-1 6-5 6z" fill="currentColor" stroke="none" /><circle cx="9.500" cy="6.500" r="1.500" stroke="#5b93be" /></Ico>
        </div>
      </Group>
      <Group className="mr-[4px] w-[27px] justify-center">
        <Ico s={17}>
          <path d="M4 7a5 5 0 0110-1H9V1v6z" fill="#6f93ad" stroke="#a9c7da" />
          <path d="M1 8h8v7H1z" fill="#f0bd3c" stroke="none" />
          <path d="M3 8V6h3v2" stroke="#f0bd3c" />
          <path d="M9 11l3 3L16 9" stroke="#55bb5c" strokeWidth="2" />
        </Ico>
      </Group>
      <Group className="mr-[3px] w-[21px] justify-center">
        <Ico><path d="M0 2h16v12H0zM10 5h3v3M6 11H3V8" /></Ico>
      </Group>
      <Group className="w-[22px] justify-center"><Burger /></Group>
    </div>
  );
}

function Pelican() {
  return (
    <svg width="75" height="35" viewBox="-6 0 75 35">
      <path d="M0 14a4 4 0 013-6c2-4 7-3 8 1 4 0 4 5 0 5zM48 9c-3-5 3-8 5-5 3-4 9-3 9 1 7-1 7 6 2 6H50z" fill="#b7d3dc" />
      <path d="M-6 35c4-5 14-4 22-5l24-1h29v7z" fill="#3f84cd" />
      <path d="M6 35l1-8 10-1 28 4 5 5z" fill="#4d4140" />
      <path d="M18 2l9-2c5-1 7 2 7 5l2 8 16 8 6-4-3 7-12 3c-9 2-16-2-15-7l3-10-2-6z" fill="#e3e3e3" />
      <path d="M30 13l12 4 11 6-10 2c-6-1-11-5-13-12z" fill="#6f6f74" />
      <path d="M18 2l9-1-1 2z" fill="#7a8790" />
      <path d="M33 26v4h-6M38 26l1 5h-6" stroke="#5db9c9" strokeWidth="2" fill="none" />
    </svg>
  );
}

function TaskApp({ className, line, children }: { className: string; line?: string; children: ReactNode }) {
  return (
    <div className={`flex h-full shrink-0 flex-col items-center justify-between ${className}`}>
      <div className="flex flex-1 items-center">{children}</div>
      <div className={`h-[2px] ${line ?? ""}`} />
    </div>
  );
}

function Taskbar() {
  return (
    <div className="flex h-[37px] items-center bg-[#edf0f0] text-[13px] text-[#3b3b3b]">
      <div className="flex w-[46px] justify-center"><FaWindows size={16} color="#111" /></div>
      <div className="flex h-full w-[321px] items-center border-b border-[#d5d5d5] bg-[#fbfcfc] pl-[10px]">
        <Search size={17} strokeWidth={1.600} className="-scale-x-100" />
        <span className="mt-[2px] ml-[9px] flex-1 tracking-[0.080px] whitespace-nowrap text-[#555]">Escribe aquí para buscar.</span>
        <Pelican />
      </div>
      <TaskApp className="w-[46px]">
        <svg width="16" height="14" viewBox="0 0 16 14" fill="none" stroke="#333" strokeWidth="1.300">
          <path d="M1 0v2h9V0M1 14v-2h9v2M1.500 4.500h8v5h-8zM14 0v14" /><path d="M12.500 4h3v3h-3z" fill="#333" stroke="none" />
        </svg>
      </TaskApp>
      <TaskApp className="w-[48px]">
        <svg width="24" height="24" viewBox="0 0 24 24">
          <circle cx="12" cy="12" r="11.500" fill="#1c78c8" />
          <path d="M1 10C3 2 10 0 15 1c7 2 9 8 8 12-2 5-8 4-9 2 3-3 1-7-3-7-5 0-8 1-10 2z" fill="#3fc5b0" />
          <path d="M14 1c7 1 10 7 9 12-1 3-5 4-7 3 4-5 3-11-2-15z" fill="#62d672" />
          <path d="M9 9c-4 4-1 11 5 11 3 0 6-1 8-3-4 8-14 9-19 3C0 14 4 9 9 9z" fill="#1659a5" />
          <path d="M13 10c-4 1-4 7 3 8 3 0 5-1 6-2-2 1-7 1-8-2 1-1 1-3-1-4z" fill="#edf0f0" />
        </svg>
      </TaskApp>
      <TaskApp className="w-[45px]">
        <svg width="21" height="18" viewBox="0 0 21 18">
          <path d="M0 1h8l2 2h10v14H0z" fill="#f2cb58" /><path d="M0 1h8l2 2H0z" fill="#c9962e" /><path d="M4 10h13v7h-4v-4H8v4H4z" fill="#4b97cb" />
        </svg>
      </TaskApp>
      <TaskApp className="w-[47px]" line="w-[37px] bg-[#1a6fae]">
        <svg width="24" height="24" viewBox="0 0 24 24">
          <circle cx="12" cy="12" r="11.500" fill="#dd4b3e" />
          <path d="M2 6l5.500 9L12 12l0 11.500C3 23.500-2 13 2 6z" fill="#35a353" />
          <path d="M22.500 7H12l5 8-5 8.500c9 0 13.500-9 10.500-16.500z" fill="#f8cd3b" />
          <circle cx="12" cy="12" r="5.500" fill="#fff" /><circle cx="12" cy="12" r="4.300" fill="#3a7ee0" />
        </svg>
      </TaskApp>
      <TaskApp className="w-[47px] bg-[#fafcfc]" line="w-[45px] bg-[#1a6fae]">
        <div className="flex h-[23px] w-[21px] flex-col items-center border-l-[3px] border-[#8b0b5e] bg-[#a80d70] leading-none font-bold text-white">
          <span className="pt-[2px] text-[12px]">C</span>
          <span className="mt-[2px] w-full bg-[#5b0840] text-center text-[5px]">C3D</span>
        </div>
      </TaskApp>
      <TaskApp className="w-[42px]" line="w-[37px] bg-[#1a7ab8]">
        <svg width="23" height="23" viewBox="0 0 23 23">
          <circle cx="11.500" cy="11.500" r="11.200" fill="#2e5fbb" /><circle cx="11.500" cy="11.500" r="8" fill="#e9eff9" />
          <path d="M3.500 11a8 8 0 0116 0l-4.500 1H8z" fill="#3d70cb" /><circle cx="11.500" cy="11.500" r="3.900" fill="#3d70cb" stroke="#e9eff9" strokeWidth="1.300" />
          <circle cx="11.500" cy="11.500" r="1.300" fill="#e9eff9" />
        </svg>
      </TaskApp>
      <div className="w-[196px]" />
      <Slot w="w-[31px]">
        <svg width="24" height="22" viewBox="0 0 24 22">
          <path d="M11 0l2 4 4 1-2 4 2 4H6L3 8l5-2z" fill="#f0ae37" />
          <path d="M5 21a5 5 0 01-1-9c2-5 10-6 12-1 4-1 8 1 8 5 0 3-2 5-5 5z" fill="#9db9ec" />
        </svg>
      </Slot>
      <Slot w="w-[35px]"><span className="tracking-[-0.400px]">15°C</span></Slot>
      <Slot w="w-[120px]"><span className="tracking-[-0.330px]">Mayorm. nubla...</span></Slot>
      <Slot w="w-[22px]"><ChevronUp size={14} color="#333" /></Slot>
      <Slot w="w-[23px]">
        <Ico s={14} className="text-[#333]"><path d="M3 1h8M3 15h8M2 4h8v8H2zM10 7l4-2v6l-4-2z" strokeWidth="1.400" /></Ico>
      </Slot>
      <Slot w="w-[23px]"><FaMicrophone size={14} color="#111" /></Slot>
      <Slot w="w-5">
        <Ico s={14} className="text-[#555]"><path d="M1 15C1 7 7 2 15 1M5 15c0-6 4-9 10-10M9 15c0-3 2-5 6-6" strokeWidth="1.300" /><circle cx="13" cy="13.500" r="1.500" fill="currentColor" /></Ico>
      </Slot>
      <Slot w="w-[26px]"><Volume2 size={16} strokeWidth={1.400} color="#444" /></Slot>
      <Slot w="w-[30px]"><span className="text-[11px] tracking-[-0.200px]">ESP</span></Slot>
      <div className="flex w-[62px] flex-col items-center text-[11px] leading-[16px] tracking-[-0.300px] whitespace-nowrap">
        <span>10:18 a. m.</span>
        <span>13/02/2026</span>
      </div>
      <div className="relative ml-[11px]">
        <svg width="16" height="16" viewBox="0 0 16 16"><path d="M0 0h16v12H9l-3 3v-3H0z" fill="#111" /><path d="M3 4h10M3 7h10" stroke="#aaa" /></svg>
        <span className="absolute top-[7px] left-[7px] flex h-[14px] w-[14px] items-center justify-center rounded-full border border-[#777] bg-[#d2d2ce] text-[10px] font-bold text-[#222]">
          4
        </span>
      </div>
    </div>
  );
}

export default function App() {
  return (
    <div className="h-[720px] w-[1280px] overflow-hidden bg-[#20282f] font-['Open_Sans','Noto_Sans',sans-serif]">
      <TitleBar />
      <MenuBar />
      <RibbonTabs />
      <Ribbon />
      <FileTabs />
      <Workspace />
      <CommandLine />
      <StatusBar />
      <Taskbar />
    </div>
  );
}
